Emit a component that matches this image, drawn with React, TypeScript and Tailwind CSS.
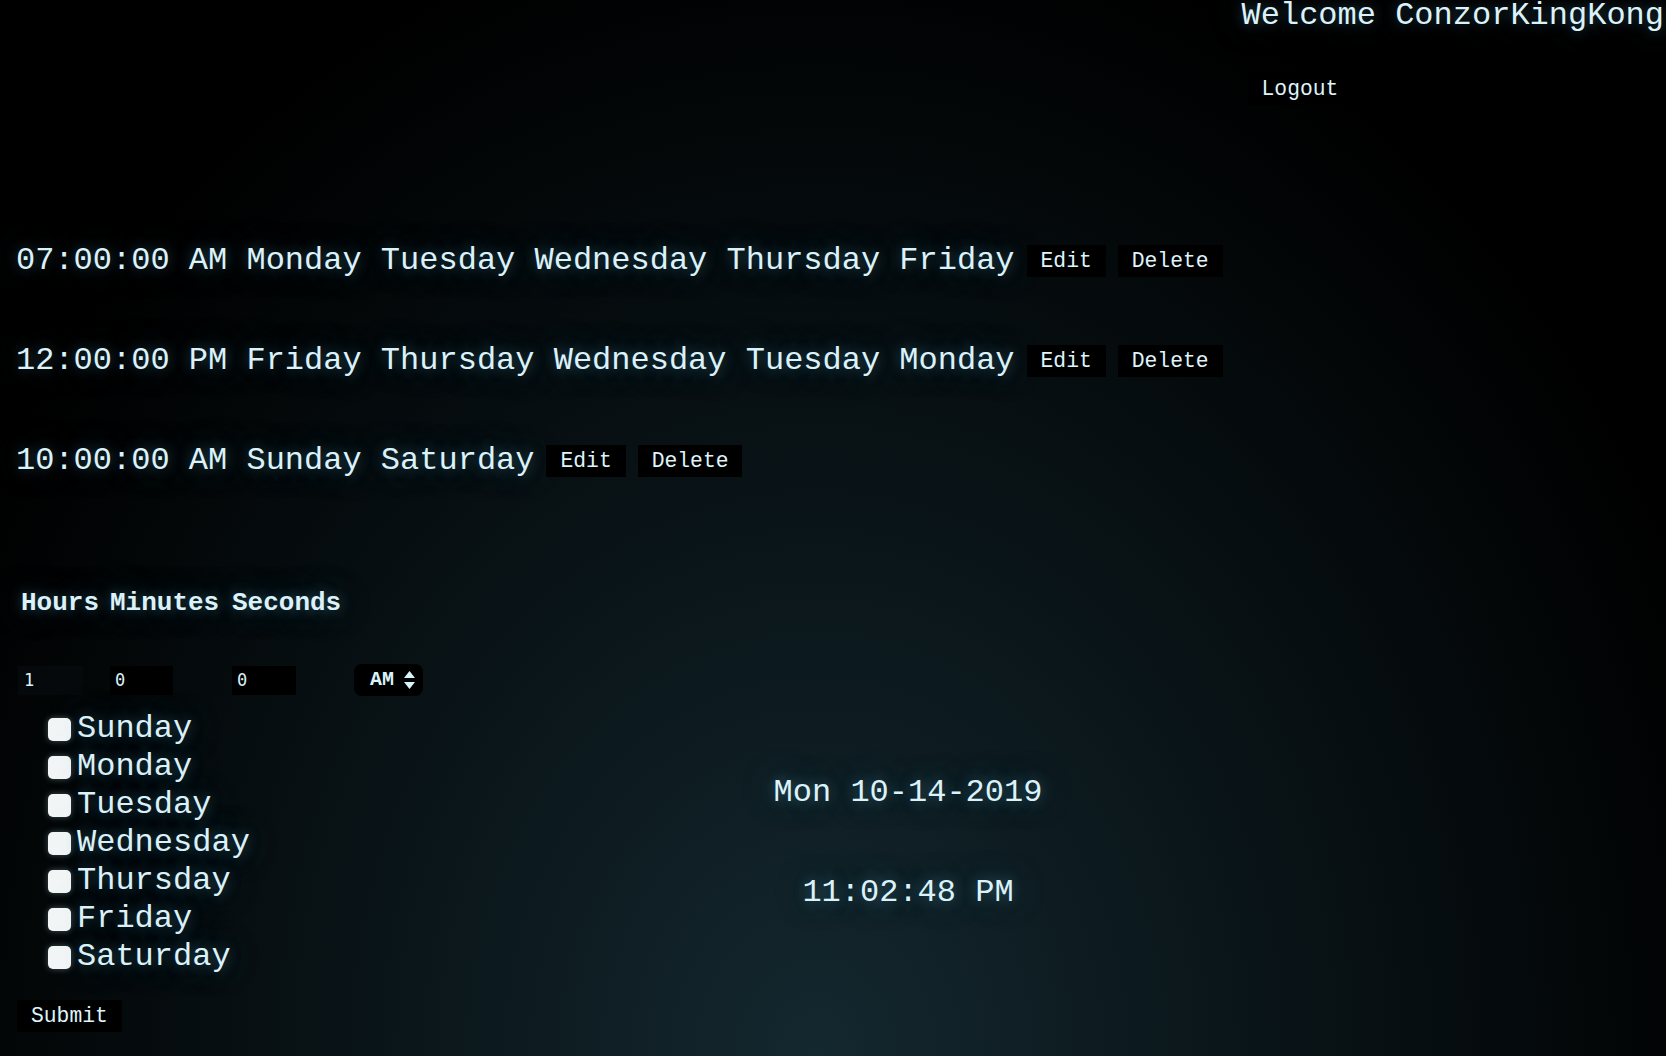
import { useState } from "react";

const alarms = [
  { time: "07:00:00 AM", days: ["Monday", "Tuesday", "Wednesday", "Thursday", "Friday"] },
  { time: "12:00:00 PM", days: ["Friday", "Thursday", "Wednesday", "Tuesday", "Monday"] },
  { time: "10:00:00 AM", days: ["Sunday", "Saturday"] },
];

const weekDays = ["Sunday", "Monday", "Tuesday", "Wednesday", "Thursday", "Friday", "Saturday"];

const glow =
  "[text-shadow:0_0_14px_rgba(120,200,230,0.35),0_0_36px_rgba(70,140,170,0.35)]";

function DarkButton({ label, className = "" }: { label: string; className?: string }) {
  return (
    <button
      className={`bg-black text-[#dff4fb] text-[21.33px] leading-6 px-[14px] py-1 ${className}`}
    >
      {label}
    </button>
  );
}

export default function App() {
  const [hours, setHours] = useState("1");
  const [minutes, setMinutes] = useState("0");
  const [seconds, setSeconds] = useState("0");
  const [checked, setChecked] = useState<Record<string, boolean>>({});

  return (
    <div className="min-h-screen w-full overflow-hidden bg-[radial-gradient(ellipse_950px_1150px_at_49%_100%,#14282f_0%,#0a1519_45%,#000_100%)] text-[#dcf2fa] font-['Liberation_Mono','Courier_New',monospace]">
      {/* header */}
      <header className="flex justify-end pr-[2px]">
        <div className="flex flex-col items-start">
          <h1 className={`m-0 text-[32px] leading-8 whitespace-nowrap ${glow}`}>
            Welcome ConzorKingKong
          </h1>
          <DarkButton label="Logout" className="mt-[41px] ml-[6px]" />
        </div>
      </header>

      {/* alarm list */}
      <div className="mt-[106px] pl-4">
        {alarms.map((a, i) => (
          <div key={i} className="flex items-center gap-3 h-[100px]">
            <span className={`text-[32px] leading-[100px] whitespace-nowrap ${glow}`}>
              {a.time} {a.days.join(" ")}
            </span>
            <DarkButton label="Edit" />
            <DarkButton label="Delete" />
          </div>
        ))}
      </div>

      {/* new alarm form + clock */}
      <div className="flex mt-[77px]">
        <form className="w-[500px] shrink-0" onSubmit={(e) => e.preventDefault()}>
          <div className={`flex pl-[21px] text-[26px] leading-[30px] font-bold ${glow}`}>
            <span className="w-[89px]">Hours</span>
            <span className="w-[122px]">Minutes</span>
            <span>Seconds</span>
          </div>

          <div className="flex items-center h-[32px] mt-[46px] pl-[18px]">
            <input
              value={hours}
              onChange={(e) => setHours(e.target.value)}
              className="w-[65px] h-[29px] bg-[#05090b] pl-[6px] text-[17px] text-[#dcf2fa] outline-none font-['DejaVu_Sans_Mono',monospace]"
            />
            <input
              value={minutes}
              onChange={(e) => setMinutes(e.target.value)}
              className="w-[63px] h-[29px] ml-[27px] bg-black pl-[5px] text-[17px] text-[#dcf2fa] outline-none font-['DejaVu_Sans_Mono',monospace]"
            />
            <input
              value={seconds}
              onChange={(e) => setSeconds(e.target.value)}
              className="w-[64px] h-[29px] ml-[59px] bg-black pl-[5px] text-[17px] text-[#dcf2fa] outline-none font-['DejaVu_Sans_Mono',monospace]"
            />
            <div className="ml-[58px] w-[69px] h-[32px] rounded-[8px] bg-black flex items-center pl-[16px] gap-[10px]">
              <span className="text-[20px] font-bold leading-none">AM</span>
              <svg width="11" height="18" viewBox="0 0 11 18" fill="#dcf2fa">
                <path d="M5.5 0 L11 7 L0 7 Z" />
                <path d="M0 11 L11 11 L5.5 18 Z" />
              </svg>
            </div>
          </div>

          <div className="mt-[14px]">
            {weekDays.map((d) => (
              <label key={d} className="flex items-center h-[38px] pl-[48px] gap-[6px] cursor-pointer">
                <input
                  type="checkbox"
                  checked={!!checked[d]}
                  onChange={() => setChecked({ ...checked, [d]: !checked[d] })}
                  className="appearance-none w-[23px] h-[23px] rounded-[5px] bg-[#f3f6f7] shadow-[0_0_6px_rgba(200,230,240,0.35)]"
                />
                <span className={`text-[32px] leading-[38px] ${glow}`}>{d}</span>
              </label>
            ))}
          </div>

          <DarkButton label="Submit" className="mt-[24px] ml-[17px]" />
        </form>

        {/* clock */}
        <div className="w-[816px] text-center">
          <p className={`mt-[185px] text-[32px] leading-10 ${glow}`}>Mon 10-14-2019</p>
          <p className={`mt-[60px] text-[32px] leading-10 ${glow}`}>11:02:48 PM</p>
        </div>
      </div>
    </div>
  );
}
